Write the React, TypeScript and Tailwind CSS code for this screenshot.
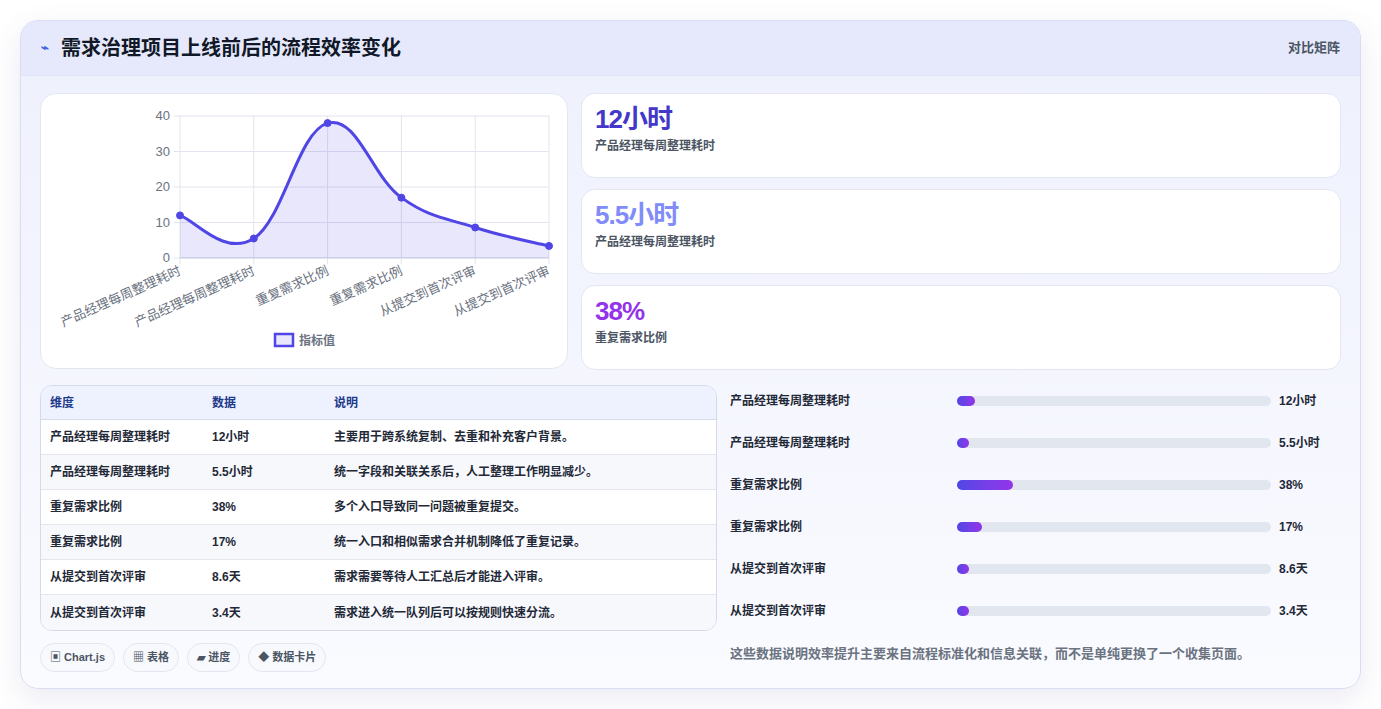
import React from "react";

const F = { fontFamily: '"Liberation Sans","Noto Sans CJK SC",sans-serif' };
const labels = ["产品经理每周整理耗时", "产品经理每周整理耗时", "重复需求比例", "重复需求比例", "从提交到首次评审", "从提交到首次评审"];
const vals = [12, 5.5, 38, 17, 8.6, 3.4];
const disp = ["12小时", "5.5小时", "38%", "17%", "8.6天", "3.4天"];
const notes = ["主要用于跨系统复制、去重和补充客户背景。", "统一字段和关联关系后，人工整理工作明显减少。", "多个入口导致同一问题被重复提交。", "统一入口和相似需求合并机制降低了重复记录。", "需求需要等待人工汇总后才能进入评审。", "需求进入统一队列后可以按规则快速分流。"];
const barW = [18, 12, 56, 25, 12, 12];

function Chart() {
  const x0 = 139, x1 = 508, yb = 164, yt = 22;
  const pts = vals.map((v, i) => [x0 + (i * (x1 - x0)) / 5, yb - (v * (yb - yt)) / 40]);
  let d = `M${pts[0][0]},${pts[0][1]}`;
  for (let i = 0; i < pts.length - 1; i++) {
    const p0 = pts[Math.max(0, i - 1)], p1 = pts[i], p2 = pts[i + 1], p3 = pts[Math.min(pts.length - 1, i + 2)];
    const t = 0.4 / 2;
    const c1 = [p1[0] + (p2[0] - p0[0]) * t, p1[1] + (p2[1] - p0[1]) * t];
    const c2 = [p2[0] - (p3[0] - p1[0]) * t, p2[1] - (p3[1] - p1[1]) * t];
    d += ` C${c1[0]},${c1[1]} ${c2[0]},${c2[1]} ${p2[0]},${p2[1]}`;
  }
  const area = d + ` L${x1},${yb} L${x0},${yb} Z`;
  return (
    <svg width="527" height="275" className="block" style={F}>
      {[0, 10, 20, 30, 40].map((v) => {
        const y = yb - (v * (yb - yt)) / 40;
        return (
          <g key={v}>
            <line x1={x0 - 6} x2={x1} y1={y} y2={y} stroke="#e2e4ee" />
            <text x={x0 - 10} y={y + 4} textAnchor="end" fontSize="13" fill="#6b7280">{v}</text>
          </g>
        );
      })}
      {pts.map((p, i) => (
        <g key={i}>
          <line x1={p[0]} x2={p[0]} y1={yt} y2={yb + 6} stroke="#e2e4ee" />
          <text transform={`translate(${p[0] + 2},${yb + 16}) rotate(-24)`} textAnchor="end" fontSize="13" fill="#6b7280">{labels[i]}</text>
        </g>
      ))}
      <line x1={x0} x2={x1} y1={yb} y2={yb} stroke="#d1d5e4" />
      <path d={area} fill="rgba(79,70,229,0.13)" />
      <path d={d} fill="none" stroke="#4f46e5" strokeWidth="3" />
      {pts.map((p, i) => (
        <circle key={i} cx={p[0]} cy={p[1]} r="3.5" fill="#4f46e5" stroke="#4f46e5" strokeWidth="1" />
      ))}
      <rect x="234" y="240" width="18" height="12" fill="rgba(79,70,229,0.13)" stroke="#4f46e5" strokeWidth="2.5" />
      <text x="258" y="251" fontSize="12" fontWeight="bold" fill="#6b7280">指标值</text>
    </svg>
  );
}

export default function App() {
  return (
    <div className="w-[1381px] h-[709px] bg-white pt-[20px] pl-[20px]" style={F}>
      <div className="w-[1341px] h-[669px] rounded-[18px] border border-[#d9dcf3] bg-gradient-to-b from-[#eef0fd] to-[#fafbff] shadow-[0_10px_30px_rgba(80,80,160,0.12)] overflow-hidden">
        <div className="h-[55px] bg-[#e6e9fc] border-b border-[#dfe2f7] flex items-center justify-between px-[20px]">
          <div className="flex items-center gap-[12px]">
            <span className="text-[#3b63e0] text-[13px] font-bold">⌁</span>
            <span className="text-[20px] font-bold text-[#111827]">需求治理项目上线前后的流程效率变化</span>
          </div>
          <span className="text-[13px] font-semibold text-[#4b5563]">对比矩阵</span>
        </div>
        <div className="px-[19px] pt-[17px]">
          <div className="flex gap-[13px]">
            <div className="w-[528px] h-[276px] rounded-[16px] bg-white border border-[#e4e6f2]">
              <Chart />
            </div>
            <div className="flex-1 flex flex-col gap-[11px]">
              {[
                ["12小时", "text-[#4338ca]"],
                ["5.5小时", "text-[#818cf8]"],
                ["38%", "text-[#9333ea]"],
              ].map(([v, c], i) => (
                <div key={i} className="h-[85px] rounded-[14px] bg-white border border-[#e4e6f2] px-[13px] pt-[9px]">
                  <div className={`text-[26px] font-bold tracking-[-1px] leading-[32px] ${c}`}>{v}</div>
                  <div className="text-[12px] font-semibold text-[#4b5563] mt-[2px]">{i === 2 ? "重复需求比例" : "产品经理每周整理耗时"}</div>
                </div>
              ))}
            </div>
          </div>
          <div className="flex gap-[13px] mt-[15px]">
            <div className="w-[677px]">
              <div className="rounded-[12px] border border-[#d5d9ea] overflow-hidden bg-white">
                <div className="flex h-[34px] items-center bg-[#eef2ff] border-b border-[#d5d9ea] text-[12px] font-bold text-[#1e3a8a]">
                  <div className="w-[171px] pl-[9px]">维度</div>
                  <div className="w-[122px]">数据</div>
                  <div>说明</div>
                </div>
                {labels.map((l, i) => (
                  <div key={i} className={`flex h-[35px] items-center text-[12px] font-semibold text-[#1f2937] ${i < 5 ? "border-b border-[#e3e6ef]" : ""} ${i % 2 ? "bg-[#f7f8fc]" : "bg-white"}`}>
                    <div className="w-[171px] pl-[9px]">{l}</div>
                    <div className="w-[122px]">{disp[i]}</div>
                    <div>{notes[i]}</div>
                  </div>
                ))}
              </div>
              <div className="flex gap-[8px] mt-[12px]">
                {["▣ Chart.js", "▦ 表格", "▰ 进度", "◆ 数据卡片"].map((t) => (
                  <span key={t} className="h-[29px] px-[9px] flex items-center rounded-full border border-[#e2e5ef] bg-[#f8f9fd] text-[11px] font-bold text-[#4b5563]">{t}</span>
                ))}
              </div>
            </div>
            <div className="flex-1 -mt-[5px]">
              {labels.map((l, i) => (
                <div key={i} className="h-[42px] flex items-center text-[12px] font-semibold text-[#1f2937]">
                  <div className="w-[227px]">{l}</div>
                  <div className="w-[314px] h-[10px] rounded-full bg-[#e2e6ee]">
                    <div className="h-full rounded-full bg-gradient-to-r from-[#4f46e5] to-[#9333ea]" style={{ width: barW[i] }} />
                  </div>
                  <div className="ml-[8px]">{disp[i]}</div>
                </div>
              ))}
              <div className="mt-[12px] text-[13px] font-semibold text-[#6b7280]">这些数据说明效率提升主要来自流程标准化和信息关联，而不是单纯更换了一个收集页面。</div>
            </div>
          </div>
        </div>
      </div>
    </div>
  );
}
